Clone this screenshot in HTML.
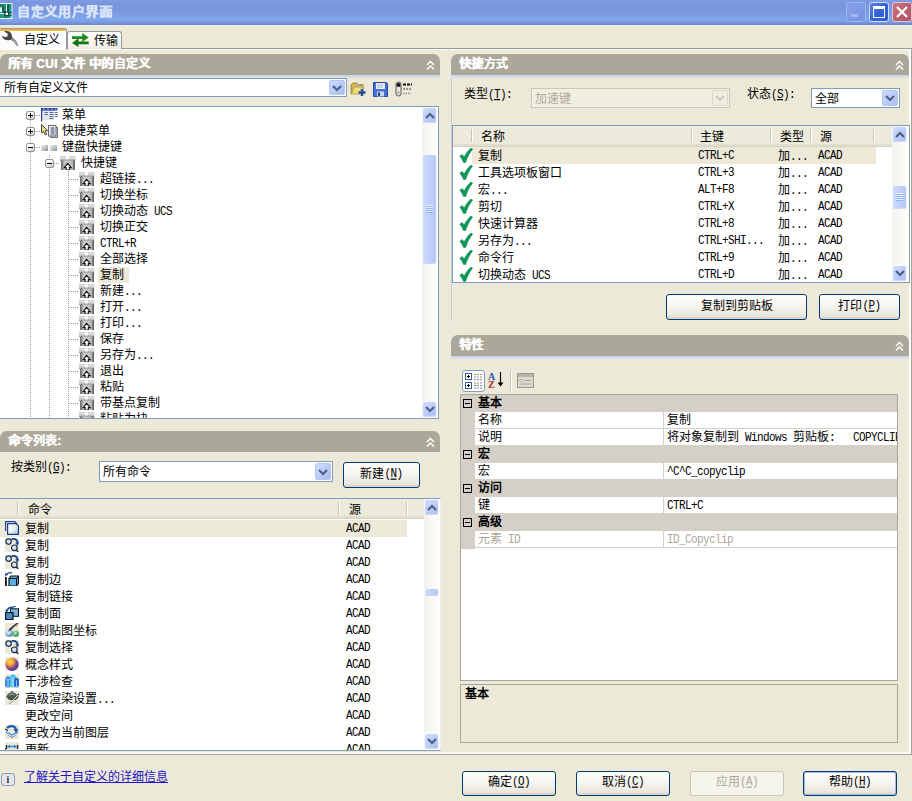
<!DOCTYPE html>
<html lang="zh-CN">
<head>
<meta charset="utf-8">
<title>自定义用户界面</title>
<style>
*{box-sizing:border-box;margin:0;padding:0}
html,body{width:912px;height:801px;overflow:hidden;background:#ece9d8}
body{position:relative;font-family:"Liberation Sans",sans-serif;font-size:12px;color:#000;line-height:16px}
.a{position:absolute}
.l{font-family:"Liberation Mono",monospace;font-size:11px;letter-spacing:-0.6px;display:inline-block;transform:scaleY(1.2);transform-origin:0 78%}
.t{position:absolute;white-space:nowrap;line-height:14px;height:14px}
/* title bar */
#tb{left:0;top:0;width:912px;height:25px;background:linear-gradient(#7f9de4 0px,#7a96df 2px,#7a96df 11px,#7ea7ec 19px,#7c9ce5 22px,#7189c8 24px,#7189c8 25px);border-bottom:1px solid #e9eef9;height:26px}
#tb .tt{left:17px;top:4px;font-size:13px;line-height:16px;color:#dbe5f9;font-weight:bold;letter-spacing:0.7px;text-shadow:.4px 0 #dbe5f9}
.cb{position:absolute;top:2px;width:19px;height:19px;border:1px solid #cfdcf8;border-radius:3px}
/* tabs */
.hdr{position:absolute;height:21px;background:#aca899;color:#fff;font-weight:bold;border-radius:7px 7px 0 0}
.hdr span{position:absolute;left:8px;top:3px;line-height:14px;white-space:nowrap;letter-spacing:.25px;text-shadow:.5px 0 #fff}
.hdr svg{position:absolute;right:5px;top:6px}
.strip{position:absolute;height:3px;background:linear-gradient(#c5d0ee,#dfe3ea)}
.combo{position:absolute;background:#fff;border:1px solid #7f9db9}
.combo .tx{position:absolute;left:3px;top:2px;line-height:14px;white-space:nowrap}
.dd{position:absolute;right:1px;top:1px;bottom:1px;width:16px;border:1px solid #b4c6f3;border-radius:2px;background:linear-gradient(135deg,#cfdcfd,#b6c9f7 60%,#a9bdf3)}
.dd svg{position:absolute;left:2px;top:50%;margin-top:-3px}
.btn{position:absolute;border:1px solid #003c74;border-radius:3px;background:linear-gradient(#ffffff,#f4f3ee 50%,#ebe8dc 85%,#d6d0c5);text-align:center;white-space:nowrap}
.btn span.c{display:inline-block}
.box{position:absolute;background:#fff;border:1px solid #7f9db9;overflow:hidden}
.sb{position:absolute;width:16px;background:linear-gradient(90deg,#f3f1ec,#fefefb)}
.sbb{position:absolute;left:0;width:15px;height:16px;border:1px solid #f6f8fe;border-bottom-color:#cfd9f3;border-radius:3px;background:linear-gradient(135deg,#cfdbfc,#bccdf8 55%,#adc0f3)}
.sbb svg{position:absolute;left:1.500px;top:3.500px}
.thumb{position:absolute;left:0;width:15px;border:1px solid #f6f8fe;border-bottom-color:#cfd9f3;border-radius:3px;background:linear-gradient(90deg,#cddafd,#c1d1fb 50%,#b5c7f6)}
.lh{position:absolute;left:0;top:0;height:20px;background:#ebeadb;border-bottom:1px solid #d6d2c2;box-shadow:inset 0 -2px 0 #e2dece}
.lh i{position:absolute;top:3px;width:1px;height:13px;background:#c7c5b2;border-right:1px solid #fff;width:2px}
.lh span{position:absolute;top:4px;line-height:14px;white-space:nowrap}
.row{position:absolute;left:0;height:17px;white-space:nowrap}
.row>span{position:absolute;top:2px;line-height:14px}
.sel{position:absolute;background:#ece9d8}
</style>
</head>
<body>
<!-- TITLE BAR -->
<div id="tb" class="a">
<svg class="a" style="left:0;top:3px" width="13" height="16" viewBox="0 0 13 16"><defs><linearGradient id="ti" x1="0" y1="0" x2="1" y2="1"><stop offset="0" stop-color="#0d7a64"/><stop offset=".6" stop-color="#1f9c86"/><stop offset="1" stop-color="#4cc8b2"/></linearGradient></defs><rect x="-1" y=".5" width="13" height="15" fill="url(#ti)" stroke="#eaf6f3" stroke-width="1"/><path d="M-1 9c.5-3 1-5 2-5s1.500 2 2 5z" fill="#e8f4f0"/><path d="M3 4v5h2M8 1.500v7.500" stroke="#0a4a3c" stroke-width="1.600" fill="none"/><path d="M6.500 1v8.500" stroke="#f4fbf9" stroke-width="1.100"/><path d="M-1 10.500h5" stroke="#f4fbf9" stroke-width="1.100"/><rect x="5" y="9" width="3.600" height="3.600" fill="#f4fbf9" stroke="#0a4a3c" stroke-width="1.200"/><path d="M9.500 9.500h2M9.500 12.500h2M5.500 13.500v1.500M8 13.500v1.500" stroke="#0a4a3c" stroke-width="1.300"/></svg>
<div class="t tt">自定义用户界面</div>
<div class="cb" style="left:846px;width:20px;height:20px;background:linear-gradient(135deg,#86a1e8,#7893e0);border-color:#9db4f0"><div class="a" style="left:4px;top:11px;width:7px;height:3px;background:#a3b8ee"></div></div>
<div class="cb" style="left:869px;width:20px;height:20px;background:linear-gradient(135deg,#5a82e6,#3463d4 50%,#2d5cd0)"><div class="a" style="left:3px;top:3px;width:12px;height:12px;border:1px solid #fff;border-top-width:3px"></div></div>
<div class="cb" style="left:892px;width:20px;height:20px;background:linear-gradient(135deg,#cc7a88,#bc5e6c 50%,#b55463);border-color:#e6c4d2"><svg class="a" style="left:3px;top:3px" width="12" height="12" viewBox="0 0 12 12"><path d="M1 1l10 10M11 1l-10 10" stroke="#fff" stroke-width="2.3"/></svg></div>
</div>
<!--TABS-->
<div class="a" style="left:0;top:48px;width:912px;height:1px;background:#919b9c"></div>
<div class="a" style="left:0;top:49px;width:912px;height:1px;background:#fbfaf6"></div>
<div class="a" style="left:67px;top:31px;width:55px;height:18px;border:1px solid #919b9c;border-bottom:none;border-radius:3px 3px 0 0;background:linear-gradient(#ffffff,#f7f6f0 60%,#ecebe4)"></div>
<svg class="a" style="left:72px;top:33px" width="17" height="14" viewBox="0 0 17 14"><path d="M0 3.200h10.200v-3.200l6.500 4.600-6.500 4.400v-2.900h-10.200z" fill="#1d8a1d"/><path d="M16.700 8.400h-10.200v-3.100l-6.500 4.700 6.500 4v-2.700h10.200z" fill="#147214"/><path d="M0 3.700h10.500" stroke="#3fae3f" stroke-width=".8"/></svg>
<div class="t" style="left:94px;top:34px">传输</div>
<div class="a" style="left:-1px;top:28px;width:68px;height:22px;border:1px solid #919b9c;border-bottom:none;border-radius:3px 3px 0 0;background:#fcfcfe;overflow:hidden"><div class="a" style="left:-1px;top:-1px;width:70px;height:3px;background:linear-gradient(#e68b2c,#ffc73c)"></div></div>
<svg class="a" style="left:2px;top:30px" width="17" height="16" viewBox="0 0 17 16"><path d="M2 1.500C5 .3 8.700 1.300 9.700 4.500 10.100 6 9.700 7 10.200 7.500 12.700 9 15.200 12 16.200 15.800L14.300 15.500C13 12.500 11 10.600 8.500 9.700 7 10.600 4.500 10.600 2.500 9.600 1 8.600 0 7 .3 5.500L3 7.200 5.600 6.200 5.600 3.600Z" fill="#474747"/><path d="M9.500 8.800C12 10 14 12.300 15.300 15.600" stroke="#bdbdbd" stroke-width="1.100" fill="none"/></svg>
<div class="t" style="left:24px;top:33px">自定义</div>
<!--LEFT-->
<div class="hdr" style="left:0;top:54px;width:440px"><span>所有 CUI 文件 中的自定义</span><svg width="9" height="11" viewBox="0 0 9 11"><path d="M1 5l3.500-3.500 3.500 3.500M1 9.500l3.500-3.500 3.500 3.500" stroke="#fff" stroke-width="1.400" fill="none"/></svg></div>
<div class="strip" style="left:0;top:75px;width:440px"></div>
<div class="combo" style="left:-1px;top:78px;width:348px;height:19px"><div class="tx" style="left:4px">所有自定义文件</div><div class="dd"><svg width="10" height="7" viewBox="0 0 10 7"><path d="M1 1l4 4 4-4" stroke="#4d6185" stroke-width="2.200" fill="none"/></svg></div></div>
<svg class="a" style="left:350px;top:81px" width="17" height="16" viewBox="0 0 17 16"><path d="M1 4l2-2h4l1 1.500h5v9h-12z" fill="#d9b64a" stroke="#8a7a3a" stroke-width=".8"/><path d="M1.500 13l2.500-7h9.500l-2.500 7z" fill="#f4dc7a" stroke="#9a8a44" stroke-width=".7"/><path d="M6 4.500l4 1M6.500 3l3 .8" stroke="#9ab0c8" stroke-width="1"/><path d="M12 8v7M8.500 11.500h7" stroke="#1d4f9a" stroke-width="2.400"/></svg>
<svg class="a" style="left:373px;top:82px" width="15" height="15" viewBox="0 0 15 15"><path d="M.5.5h13l1 1v13h-14z" fill="#4673d3" stroke="#2a4aa0"/><rect x="3" y="1" width="9" height="6" fill="#e8eefc"/><path d="M4 3h6M4 5h6" stroke="#9aaad0" stroke-width=".8"/><rect x="4" y="9.500" width="7" height="5" fill="#c9d3ea"/><rect x="5" y="10.500" width="2" height="3.500" fill="#28408a"/></svg>
<svg class="a" style="left:395px;top:81px" width="18" height="16" viewBox="0 0 18 16"><rect x="1" y="1" width="5" height="14" rx="2.500" fill="#e6e6e6" stroke="#555" stroke-width="1"/><circle cx="3.500" cy="4" r="2" fill="#111"/><circle cx="3.500" cy="11.500" r="1.500" fill="#bbb"/><path d="M8 3.500h9" stroke="#111" stroke-width="2" stroke-dasharray="3 1"/><path d="M8 8h8" stroke="#777" stroke-width="1.500" stroke-dasharray="2 1"/><path d="M8 12.500h8" stroke="#999" stroke-width="1.500" stroke-dasharray="1.500 1"/></svg>
<div class="box" style="left:-1px;top:106px;width:440px;height:313px">
<div class="a" style="left:30px;top:9px;width:1px;height:310px;background-image:linear-gradient(#a0a0a0 50%,transparent 50%);background-size:1px 2px"></div><div class="a" style="left:49px;top:48px;width:1px;height:270px;background-image:linear-gradient(#a0a0a0 50%,transparent 50%);background-size:1px 2px"></div><div class="a" style="left:68px;top:64px;width:1px;height:260px;background-image:linear-gradient(#a0a0a0 50%,transparent 50%);background-size:1px 2px"></div>
<div class="a" style="left:35px;top:8px;width:6px;height:1px;background-image:linear-gradient(90deg,#a0a0a0 50%,transparent 50%);background-size:2px 1px"></div><div class="a" style="left:26px;top:4px;width:9px;height:9px;border:1px solid #8a98a6;border-radius:2px;background:linear-gradient(135deg,#fff 30%,#c8c1b2)"><div class="a" style="left:1px;top:3px;width:5px;height:1px;background:#000"></div><div class="a" style="left:3px;top:1px;width:1px;height:5px;background:#000"></div></div><svg class="a" style="left:41px;top:1px" width="17" height="14" viewBox="0 0 17 14"><rect x="1" y="2" width="12" height="10" fill="#e6e6ee"/><path d="M.6 0v13.500" stroke="#1d3f94" stroke-width="1.200"/><rect x="0" y="0" width="16.500" height="2.600" fill="#1d3f94"/><path d="M2 1.200h2M6 1.200h2M10 1.200h2M14 1.200h1.500" stroke="#e6ecfa" stroke-width=".8"/><path d="M3.500 4.500h3.500M3.500 6.500h3.500M8.500 4.500h4M8.500 6.500h4M8.500 8.500h4M8.500 10.500h4M13.700 4.500h3M13.700 6.500h3M13.700 8.500h3" stroke="#5a6a9a" stroke-width="1.100"/></svg><div class="t" style="left:62px;top:1px">菜单</div>
<div class="a" style="left:35px;top:24px;width:6px;height:1px;background-image:linear-gradient(90deg,#a0a0a0 50%,transparent 50%);background-size:2px 1px"></div><div class="a" style="left:26px;top:20px;width:9px;height:9px;border:1px solid #8a98a6;border-radius:2px;background:linear-gradient(135deg,#fff 30%,#c8c1b2)"><div class="a" style="left:1px;top:3px;width:5px;height:1px;background:#000"></div><div class="a" style="left:3px;top:1px;width:1px;height:5px;background:#000"></div></div><svg class="a" style="left:41px;top:17px" width="17" height="14" viewBox="0 0 17 14"><rect x="9.500" y="3.500" width="7" height="10" fill="#ddd" stroke="#777"/><rect x="7.500" y="1.500" width="7.500" height="10.500" fill="#f4f4f4" stroke="#666"/><path d="M9.500 4h4M9.500 6h4M9.500 8h4M9.500 10h4" stroke="#2a3a7a" stroke-width="1"/><path d="M.6.5v8.500l2-1.600 1.700 3.600 1.500-.7-1.700-3.500h2.600z" fill="#f2ea7c" stroke="#333" stroke-width=".9"/></svg><div class="t" style="left:62px;top:17px">快捷菜单</div>
<div class="a" style="left:35px;top:40px;width:6px;height:1px;background-image:linear-gradient(90deg,#a0a0a0 50%,transparent 50%);background-size:2px 1px"></div><div class="a" style="left:26px;top:36px;width:9px;height:9px;border:1px solid #8a98a6;border-radius:2px;background:linear-gradient(135deg,#fff 30%,#c8c1b2)"><div class="a" style="left:1px;top:3px;width:5px;height:1px;background:#000"></div></div><div class="a" style="left:41px;top:38px;width:7px;height:6px;background:linear-gradient(135deg,#f0f0f0,#c4c4c4 50%,#8c8c8c)"></div><div class="a" style="left:50px;top:38px;width:7px;height:6px;background:linear-gradient(135deg,#f0f0f0,#c4c4c4 50%,#8c8c8c)"></div><div class="t" style="left:62px;top:33px">键盘快捷键</div>
<div class="a" style="left:54px;top:56px;width:6px;height:1px;background-image:linear-gradient(90deg,#a0a0a0 50%,transparent 50%);background-size:2px 1px"></div><div class="a" style="left:45px;top:52px;width:9px;height:9px;border:1px solid #8a98a6;border-radius:2px;background:linear-gradient(135deg,#fff 30%,#c8c1b2)"><div class="a" style="left:1px;top:3px;width:5px;height:1px;background:#000"></div></div><svg class="a" style="left:60px;top:49px" width="16" height="14" viewBox="0 0 16 14"><path d="M0 0h6v3.200h2.800v-3.200h6.700v5h-15.500z" fill="url(#kt)"/><rect x="1" y="4.600" width="14" height="9.400" fill="url(#kg)"/><path d="M7.700 7.400l3.500 4.200h-1.900v2.400h-3.200v-2.400h-1.900z" fill="#fff" stroke="#111" stroke-width="1.100"/></svg><div class="t" style="left:81px;top:49px">快捷键</div>
<div class="a" style="left:69px;top:72px;width:10px;height:1px;background-image:linear-gradient(90deg,#a0a0a0 50%,transparent 50%);background-size:2px 1px"></div><svg class="a" style="left:79px;top:65px" width="16" height="14" viewBox="0 0 16 14"><path d="M0 0h6v3.200h2.800v-3.200h6.700v5h-15.500z" fill="url(#kt)"/><rect x="1" y="4.600" width="14" height="9.400" fill="url(#kg)"/><path d="M7.700 7.400l3.500 4.200h-1.900v2.400h-3.200v-2.400h-1.900z" fill="#fff" stroke="#111" stroke-width="1.100"/></svg><div class="t" style="left:100px;top:65px">超链接<span class="l">...</span></div>
<div class="a" style="left:69px;top:88px;width:10px;height:1px;background-image:linear-gradient(90deg,#a0a0a0 50%,transparent 50%);background-size:2px 1px"></div><svg class="a" style="left:79px;top:81px" width="16" height="14" viewBox="0 0 16 14"><path d="M0 0h6v3.200h2.800v-3.200h6.700v5h-15.500z" fill="url(#kt)"/><rect x="1" y="4.600" width="14" height="9.400" fill="url(#kg)"/><path d="M7.700 7.400l3.500 4.200h-1.900v2.400h-3.200v-2.400h-1.900z" fill="#fff" stroke="#111" stroke-width="1.100"/></svg><div class="t" style="left:100px;top:81px">切换坐标</div>
<div class="a" style="left:69px;top:104px;width:10px;height:1px;background-image:linear-gradient(90deg,#a0a0a0 50%,transparent 50%);background-size:2px 1px"></div><svg class="a" style="left:79px;top:97px" width="16" height="14" viewBox="0 0 16 14"><path d="M0 0h6v3.200h2.800v-3.200h6.700v5h-15.500z" fill="url(#kt)"/><rect x="1" y="4.600" width="14" height="9.400" fill="url(#kg)"/><path d="M7.700 7.400l3.500 4.200h-1.900v2.400h-3.200v-2.400h-1.900z" fill="#fff" stroke="#111" stroke-width="1.100"/></svg><div class="t" style="left:100px;top:97px">切换动态<span class="l">&nbsp;UCS</span></div>
<div class="a" style="left:69px;top:120px;width:10px;height:1px;background-image:linear-gradient(90deg,#a0a0a0 50%,transparent 50%);background-size:2px 1px"></div><svg class="a" style="left:79px;top:113px" width="16" height="14" viewBox="0 0 16 14"><path d="M0 0h6v3.200h2.800v-3.200h6.700v5h-15.500z" fill="url(#kt)"/><rect x="1" y="4.600" width="14" height="9.400" fill="url(#kg)"/><path d="M7.700 7.400l3.500 4.200h-1.900v2.400h-3.200v-2.400h-1.900z" fill="#fff" stroke="#111" stroke-width="1.100"/></svg><div class="t" style="left:100px;top:113px">切换正交</div>
<div class="a" style="left:69px;top:136px;width:10px;height:1px;background-image:linear-gradient(90deg,#a0a0a0 50%,transparent 50%);background-size:2px 1px"></div><svg class="a" style="left:79px;top:129px" width="16" height="14" viewBox="0 0 16 14"><path d="M0 0h6v3.200h2.800v-3.200h6.700v5h-15.500z" fill="url(#kt)"/><rect x="1" y="4.600" width="14" height="9.400" fill="url(#kg)"/><path d="M7.700 7.400l3.500 4.200h-1.900v2.400h-3.200v-2.400h-1.900z" fill="#fff" stroke="#111" stroke-width="1.100"/></svg><div class="t" style="left:100px;top:129px"><span class="l">CTRL+R</span></div>
<div class="a" style="left:69px;top:152px;width:10px;height:1px;background-image:linear-gradient(90deg,#a0a0a0 50%,transparent 50%);background-size:2px 1px"></div><svg class="a" style="left:79px;top:145px" width="16" height="14" viewBox="0 0 16 14"><path d="M0 0h6v3.200h2.800v-3.200h6.700v5h-15.500z" fill="url(#kt)"/><rect x="1" y="4.600" width="14" height="9.400" fill="url(#kg)"/><path d="M7.700 7.400l3.500 4.200h-1.900v2.400h-3.200v-2.400h-1.900z" fill="#fff" stroke="#111" stroke-width="1.100"/></svg><div class="t" style="left:100px;top:145px">全部选择</div>
<div class="a" style="left:69px;top:168px;width:10px;height:1px;background-image:linear-gradient(90deg,#a0a0a0 50%,transparent 50%);background-size:2px 1px"></div><div class="sel" style="left:98px;top:160px;width:31px;height:16px"></div><svg class="a" style="left:79px;top:161px" width="16" height="14" viewBox="0 0 16 14"><path d="M0 0h6v3.200h2.800v-3.200h6.700v5h-15.500z" fill="url(#kt)"/><rect x="1" y="4.600" width="14" height="9.400" fill="url(#kg)"/><path d="M7.700 7.400l3.500 4.200h-1.900v2.400h-3.200v-2.400h-1.900z" fill="#fff" stroke="#111" stroke-width="1.100"/></svg><div class="t" style="left:100px;top:161px">复制</div>
<div class="a" style="left:69px;top:184px;width:10px;height:1px;background-image:linear-gradient(90deg,#a0a0a0 50%,transparent 50%);background-size:2px 1px"></div><svg class="a" style="left:79px;top:177px" width="16" height="14" viewBox="0 0 16 14"><path d="M0 0h6v3.200h2.800v-3.200h6.700v5h-15.500z" fill="url(#kt)"/><rect x="1" y="4.600" width="14" height="9.400" fill="url(#kg)"/><path d="M7.700 7.400l3.500 4.200h-1.900v2.400h-3.200v-2.400h-1.900z" fill="#fff" stroke="#111" stroke-width="1.100"/></svg><div class="t" style="left:100px;top:177px">新建<span class="l">...</span></div>
<div class="a" style="left:69px;top:200px;width:10px;height:1px;background-image:linear-gradient(90deg,#a0a0a0 50%,transparent 50%);background-size:2px 1px"></div><svg class="a" style="left:79px;top:193px" width="16" height="14" viewBox="0 0 16 14"><path d="M0 0h6v3.200h2.800v-3.200h6.700v5h-15.500z" fill="url(#kt)"/><rect x="1" y="4.600" width="14" height="9.400" fill="url(#kg)"/><path d="M7.700 7.400l3.500 4.200h-1.900v2.400h-3.200v-2.400h-1.900z" fill="#fff" stroke="#111" stroke-width="1.100"/></svg><div class="t" style="left:100px;top:193px">打开<span class="l">...</span></div>
<div class="a" style="left:69px;top:216px;width:10px;height:1px;background-image:linear-gradient(90deg,#a0a0a0 50%,transparent 50%);background-size:2px 1px"></div><svg class="a" style="left:79px;top:209px" width="16" height="14" viewBox="0 0 16 14"><path d="M0 0h6v3.200h2.800v-3.200h6.700v5h-15.500z" fill="url(#kt)"/><rect x="1" y="4.600" width="14" height="9.400" fill="url(#kg)"/><path d="M7.700 7.400l3.500 4.200h-1.900v2.400h-3.200v-2.400h-1.900z" fill="#fff" stroke="#111" stroke-width="1.100"/></svg><div class="t" style="left:100px;top:209px">打印<span class="l">...</span></div>
<div class="a" style="left:69px;top:232px;width:10px;height:1px;background-image:linear-gradient(90deg,#a0a0a0 50%,transparent 50%);background-size:2px 1px"></div><svg class="a" style="left:79px;top:225px" width="16" height="14" viewBox="0 0 16 14"><path d="M0 0h6v3.200h2.800v-3.200h6.700v5h-15.500z" fill="url(#kt)"/><rect x="1" y="4.600" width="14" height="9.400" fill="url(#kg)"/><path d="M7.700 7.400l3.500 4.200h-1.900v2.400h-3.200v-2.400h-1.900z" fill="#fff" stroke="#111" stroke-width="1.100"/></svg><div class="t" style="left:100px;top:225px">保存</div>
<div class="a" style="left:69px;top:248px;width:10px;height:1px;background-image:linear-gradient(90deg,#a0a0a0 50%,transparent 50%);background-size:2px 1px"></div><svg class="a" style="left:79px;top:241px" width="16" height="14" viewBox="0 0 16 14"><path d="M0 0h6v3.200h2.800v-3.200h6.700v5h-15.500z" fill="url(#kt)"/><rect x="1" y="4.600" width="14" height="9.400" fill="url(#kg)"/><path d="M7.700 7.400l3.500 4.200h-1.900v2.400h-3.200v-2.400h-1.900z" fill="#fff" stroke="#111" stroke-width="1.100"/></svg><div class="t" style="left:100px;top:241px">另存为<span class="l">...</span></div>
<div class="a" style="left:69px;top:264px;width:10px;height:1px;background-image:linear-gradient(90deg,#a0a0a0 50%,transparent 50%);background-size:2px 1px"></div><svg class="a" style="left:79px;top:257px" width="16" height="14" viewBox="0 0 16 14"><path d="M0 0h6v3.200h2.800v-3.200h6.700v5h-15.500z" fill="url(#kt)"/><rect x="1" y="4.600" width="14" height="9.400" fill="url(#kg)"/><path d="M7.700 7.400l3.500 4.200h-1.900v2.400h-3.200v-2.400h-1.900z" fill="#fff" stroke="#111" stroke-width="1.100"/></svg><div class="t" style="left:100px;top:257px">退出</div>
<div class="a" style="left:69px;top:280px;width:10px;height:1px;background-image:linear-gradient(90deg,#a0a0a0 50%,transparent 50%);background-size:2px 1px"></div><svg class="a" style="left:79px;top:273px" width="16" height="14" viewBox="0 0 16 14"><path d="M0 0h6v3.200h2.800v-3.200h6.700v5h-15.500z" fill="url(#kt)"/><rect x="1" y="4.600" width="14" height="9.400" fill="url(#kg)"/><path d="M7.700 7.400l3.500 4.200h-1.900v2.400h-3.200v-2.400h-1.900z" fill="#fff" stroke="#111" stroke-width="1.100"/></svg><div class="t" style="left:100px;top:273px">粘贴</div>
<div class="a" style="left:69px;top:296px;width:10px;height:1px;background-image:linear-gradient(90deg,#a0a0a0 50%,transparent 50%);background-size:2px 1px"></div><svg class="a" style="left:79px;top:289px" width="16" height="14" viewBox="0 0 16 14"><path d="M0 0h6v3.200h2.800v-3.200h6.700v5h-15.500z" fill="url(#kt)"/><rect x="1" y="4.600" width="14" height="9.400" fill="url(#kg)"/><path d="M7.700 7.400l3.500 4.200h-1.900v2.400h-3.200v-2.400h-1.900z" fill="#fff" stroke="#111" stroke-width="1.100"/></svg><div class="t" style="left:100px;top:289px">带基点复制</div>
<div class="a" style="left:69px;top:312px;width:10px;height:1px;background-image:linear-gradient(90deg,#a0a0a0 50%,transparent 50%);background-size:2px 1px"></div><svg class="a" style="left:79px;top:305px" width="16" height="14" viewBox="0 0 16 14"><path d="M0 0h6v3.200h2.800v-3.200h6.700v5h-15.500z" fill="url(#kt)"/><rect x="1" y="4.600" width="14" height="9.400" fill="url(#kg)"/><path d="M7.700 7.400l3.500 4.200h-1.900v2.400h-3.200v-2.400h-1.900z" fill="#fff" stroke="#111" stroke-width="1.100"/></svg><div class="t" style="left:100px;top:305px">粘贴为块</div>
<div class="sb" style="left:422px;top:0px;height:310px"><div class="sbb" style="top:0"><svg width="10" height="7" viewBox="0 0 10 7"><path d="M1 6l4-4 4 4" stroke="#4d6185" stroke-width="2.200" fill="none"/></svg></div><div class="thumb" style="top:47px;height:110px"><div class="a" style="left:3px;top:50%;margin-top:-4px;width:7px;height:8px;background:repeating-linear-gradient(#eef4fe 0,#eef4fe 1px,#8cb0f8 1px,#8cb0f8 2px)"></div></div><div class="sbb" style="top:294px"><svg width="10" height="7" viewBox="0 0 10 7"><path d="M1 1l4 4 4-4" stroke="#4d6185" stroke-width="2.200" fill="none"/></svg></div></div></div>
<div class="hdr" style="left:0;top:431px;width:440px"><span>命令列表:</span><svg width="9" height="11" viewBox="0 0 9 11"><path d="M1 5l3.500-3.500 3.500 3.500M1 9.500l3.500-3.500 3.500 3.500" stroke="#fff" stroke-width="1.400" fill="none"/></svg></div>
<div class="t" style="left:11px;top:460px">按类别<span class="l">(<u>G</u>):</span></div>
<div class="combo" style="left:99px;top:461px;width:234px;height:21px"><div class="tx" style="top:3px">所有命令</div><div class="dd"><svg width="10" height="7" viewBox="0 0 10 7"><path d="M1 1l4 4 4-4" stroke="#4d6185" stroke-width="2.200" fill="none"/></svg></div></div>
<div class="btn" style="left:343px;top:462px;width:77px;height:26px;line-height:22px">新建<span class="l">(<u>N</u>)</span></div>
<div class="box" style="left:-1px;top:498px;width:442px;height:253px;border-right-color:#e8edf6">
<div class="lh" style="width:424px"><i style="left:17px"></i><span style="left:28px">命令</span><i style="left:338px"></i><span style="left:349px">源</span><i style="left:406px"></i></div>
<div class="sel" style="left:0;top:21px;width:407px;height:17px"></div>
<div class="row" style="top:21px"><span style="left:25px">复制</span><span class="l" style="left:346px">ACAD</span></div>
<div class="row" style="top:38px"><span style="left:25px">复制</span><span class="l" style="left:346px">ACAD</span></div>
<div class="row" style="top:55px"><span style="left:25px">复制</span><span class="l" style="left:346px">ACAD</span></div>
<div class="row" style="top:72px"><span style="left:25px">复制边</span><span class="l" style="left:346px">ACAD</span></div>
<div class="row" style="top:89px"><span style="left:25px">复制链接</span><span class="l" style="left:346px">ACAD</span></div>
<div class="row" style="top:106px"><span style="left:25px">复制面</span><span class="l" style="left:346px">ACAD</span></div>
<div class="row" style="top:123px"><span style="left:25px">复制贴图坐标</span><span class="l" style="left:346px">ACAD</span></div>
<div class="row" style="top:140px"><span style="left:25px">复制选择</span><span class="l" style="left:346px">ACAD</span></div>
<div class="row" style="top:157px"><span style="left:25px">概念样式</span><span class="l" style="left:346px">ACAD</span></div>
<div class="row" style="top:174px"><span style="left:25px">干涉检查</span><span class="l" style="left:346px">ACAD</span></div>
<div class="row" style="top:191px"><span style="left:25px">高级渲染设置<span class="l">...</span></span><span class="l" style="left:346px">ACAD</span></div>
<div class="row" style="top:208px"><span style="left:25px">更改空间</span><span class="l" style="left:346px">ACAD</span></div>
<div class="row" style="top:225px"><span style="left:25px">更改为当前图层</span><span class="l" style="left:346px">ACAD</span></div>
<div class="row" style="top:242px"><span style="left:25px">更新</span><span class="l" style="left:346px">ACAD</span></div>
<svg width="0" height="0" style="position:absolute"><defs><linearGradient id="gcp" x1="0" y1="0" x2="1" y2="1"><stop offset="0" stop-color="#fff"/><stop offset=".5" stop-color="#eef4f8"/><stop offset="1" stop-color="#9cc4dc"/></linearGradient><radialGradient id="gsp" cx=".35" cy=".3" r=".8"><stop offset="0" stop-color="#ffe060"/><stop offset=".35" stop-color="#f4a028"/><stop offset=".6" stop-color="#8a4a90"/><stop offset="1" stop-color="#3a30a0"/></radialGradient><radialGradient id="gbl" cx=".4" cy=".35" r=".7"><stop offset="0" stop-color="#fff"/><stop offset=".5" stop-color="#9cc8ec"/><stop offset="1" stop-color="#2a6ab0"/></radialGradient><radialGradient id="ggr" cx=".4" cy=".35" r=".7"><stop offset="0" stop-color="#d8f4d8"/><stop offset=".5" stop-color="#5ab868"/><stop offset="1" stop-color="#1a7a30"/></radialGradient><linearGradient id="kg" x1="0" y1="0" x2="1" y2="0"><stop offset="0" stop-color="#6c6c6c"/><stop offset=".14" stop-color="#8a8a8a"/><stop offset=".2" stop-color="#c2c2c2"/><stop offset=".55" stop-color="#cdcdcd"/><stop offset=".82" stop-color="#b4b4b4"/><stop offset=".88" stop-color="#7a7a7a"/><stop offset="1" stop-color="#666"/></linearGradient><linearGradient id="kt" x1="0" y1="0" x2="0" y2="1"><stop offset="0" stop-color="#c8c8c8"/><stop offset=".3" stop-color="#e2e2e2"/><stop offset=".7" stop-color="#bcbcbc"/><stop offset="1" stop-color="#888"/></linearGradient></defs></svg>
<svg class="a" style="left:5px;top:22px" width="14" height="14" viewBox="0 0 14 14"><rect width="14" height="14" fill="#ece9d8"/><path d="M.6 10v-9.400h9l2 2v1" stroke="#1a3c8c" stroke-width="1.200" fill="#f4f8fc"/><path d="M2.600 2.600h8.400l2.400 2.400v8.400h-10.800z" fill="url(#gcp)" stroke="#1a3c8c" stroke-width="1.200"/></svg>
<svg class="a" style="left:5px;top:39px" width="14" height="14" viewBox="0 0 14 14"><rect width="14" height="14" fill="#ece9d8"/><circle cx="3.600" cy="3.600" r="2.700" fill="#d4e6f6" stroke="#1e2c48" stroke-width="1.200"/><circle cx="9.300" cy="9.800" r="2.800" fill="#d4e6f6" stroke="#1e2c48" stroke-width="1.200"/><path d="M6.500 1.300c3-1.300 6 .2 6.200 3.700" stroke="#1d4e8c" stroke-width="1.800" fill="none"/><path d="M10.200 4.300h4l-1.800 3.400z" fill="#1d4e8c"/><path d="M11.300 12l2 1.800" stroke="#1e2c48" stroke-width="1.500"/></svg>
<svg class="a" style="left:5px;top:56px" width="14" height="14" viewBox="0 0 14 14"><rect width="14" height="14" fill="#ece9d8"/><circle cx="3.600" cy="3.600" r="2.700" fill="#d4e6f6" stroke="#1e2c48" stroke-width="1.200"/><circle cx="9.300" cy="9.800" r="2.800" fill="#d4e6f6" stroke="#1e2c48" stroke-width="1.200"/><path d="M6.500 1.300c3-1.300 6 .2 6.200 3.700" stroke="#1d4e8c" stroke-width="1.800" fill="none"/><path d="M10.200 4.300h4l-1.800 3.400z" fill="#1d4e8c"/><path d="M11.300 12l2 1.800" stroke="#1e2c48" stroke-width="1.500"/></svg>
<svg class="a" style="left:5px;top:141px" width="14" height="14" viewBox="0 0 14 14"><rect width="14" height="14" fill="#ece9d8"/><circle cx="3.600" cy="3.600" r="2.700" fill="#d4e6f6" stroke="#1e2c48" stroke-width="1.200"/><circle cx="9.300" cy="9.800" r="2.800" fill="#d4e6f6" stroke="#1e2c48" stroke-width="1.200"/><path d="M6.500 1.300c3-1.300 6 .2 6.200 3.700" stroke="#1d4e8c" stroke-width="1.800" fill="none"/><path d="M10.200 4.300h4l-1.800 3.400z" fill="#1d4e8c"/><path d="M11.300 12l2 1.800" stroke="#1e2c48" stroke-width="1.500"/></svg>
<svg class="a" style="left:5px;top:73px" width="14" height="14" viewBox="0 0 14 14"><rect x="0" y="5" width="1.800" height="9" fill="#111"/><path d="M4 6.500l2-2.500h7.500v7.500l-2 2.500h-7.500z" fill="#58b2e0" stroke="#111" stroke-width="1.200"/><path d="M4 6.500h7.500v7.500M11.500 6.500l2-2.500" stroke="#111" stroke-width="1" fill="none"/><path d="M1.200 3.200c1-2.400 4-3 6-2" stroke="#1d4e8c" stroke-width="1.300" fill="none"/><path d="M0 .8l.4 3.400 2.800-1.600z" fill="#1d4e8c"/></svg>
<svg class="a" style="left:5px;top:107px" width="14" height="14" viewBox="0 0 14 14"><rect x="5.500" y="2.800" width="8" height="7.500" fill="#7ab4e4" stroke="#111"/><rect x=".6" y="6.600" width="7.400" height="6.900" fill="#4a8cd0" stroke="#111" stroke-width="1.200"/><path d="M2 5.200c.2-3 3.400-4.600 6.400-3.400" stroke="#1d4e8c" stroke-width="1.600" fill="none"/><path d="M0 3.600l3.600.4-2 2.800z" fill="#1d4e8c"/><path d="M8 1l3-1" stroke="#1d4e8c" stroke-width="1.200"/></svg>
<svg class="a" style="left:5px;top:124px" width="14" height="14" viewBox="0 0 14 14"><rect width="14" height="14" fill="#ece9d8"/><circle cx="10.800" cy="10.800" r="3" fill="url(#ggr)"/><circle cx="4.200" cy="10" r="3.800" fill="url(#gbl)"/><path d="M13.500 0l-7.500 7-3 2 1.500-3.500 7.500-6z" fill="#3a3a3a"/><path d="M13.500 0l-3 2.500 1 1z" fill="#c87a3a"/></svg>
<svg class="a" style="left:5px;top:158px" width="14" height="14" viewBox="0 0 14 14"><rect width="14" height="14" fill="#ece9d8"/><circle cx="7" cy="7.300" r="6.600" fill="url(#gsp)"/></svg>
<svg class="a" style="left:5px;top:175px" width="14" height="14" viewBox="0 0 14 14"><rect width="14" height="14" fill="#ece9d8"/><path d="M0 4l3-2 3 2v8l-3 2-3-2z" fill="#3a8ad8"/><path d="M3 6v8M0 4l3 2 3-2" stroke="#9ad4f8" stroke-width="1" fill="none"/><path d="M5 2l3-2 3 2v10l-3 2-3-2z" fill="#58c0f0"/><path d="M8 4v10" stroke="#d0f0ff" stroke-width="1"/><path d="M9 5l2.500-1.500 2.500 1.500v7l-2.500 1.500-2.500-1.500z" fill="#2a6ac8"/><path d="M11.500 6.500v7" stroke="#8ac8f4" stroke-width="1"/></svg>
<svg class="a" style="left:5px;top:192px" width="14" height="14" viewBox="0 0 14 14"><rect width="14" height="14" fill="#ece9d8"/><path d="M2 5c0-2 2-3.500 5-3.500s5 1.500 5 3.500l1.500-1v2l-2.500 3h-7l-3-3.500 1-.5z" fill="#4a5a4e"/><path d="M5.500 1.500h3l-.5-1.500h-2z" fill="#5a6a5e"/><path d="M4 4.500c1-1.500 4-1.500 5.500-.5" stroke="#a8b8aa" stroke-width="1" fill="none"/><path d="M13.500 2.500l-8 8.500-1.500 2 2.200-1.200 8-8.500z" fill="#222"/><path d="M13 4l-7.500 7.800" stroke="#fff" stroke-width="1"/></svg>
<svg class="a" style="left:5px;top:226px" width="14" height="14" viewBox="0 0 14 14"><rect width="14" height="14" fill="#ece9d8"/><path d="M1 9l6 3 6-3-6 4z" fill="#2a6ab8"/><path d="M1 7l6 3 6-3" stroke="#5a9ad8" stroke-width="1.400" fill="none"/><path d="M2 3c3-3 8-2.500 9 1.500" stroke="#1d5ab0" stroke-width="2.200" fill="none"/><path d="M8.500 4h5l-2.500 4.500z" fill="#1d5ab0"/><path d="M0 4l3 1.500" stroke="#222" stroke-width="1.200"/></svg>
<svg class="a" style="left:5px;top:243px" width="14" height="14" viewBox="0 0 14 14"><rect width="14" height="14" fill="#ece9d8"/><path d="M1.500 3v4M12.500 3v4" stroke="#222" stroke-width="1.400"/><path d="M3 4.500h8" stroke="#3a8ad0" stroke-width="1.600"/><path d="M2 4.500l3-2v4zM12 4.500l-3-2v4z" fill="#3a8ad0"/><path d="M0 7h1" stroke="#222" stroke-width="1.500"/></svg>
<div class="sb" style="left:424px;top:0px;height:250px"><div class="sbb" style="top:0"><svg width="10" height="7" viewBox="0 0 10 7"><path d="M1 6l4-4 4 4" stroke="#4d6185" stroke-width="2.200" fill="none"/></svg></div><div class="thumb" style="top:89px;height:8px"></div><div class="sbb" style="top:234px"><svg width="10" height="7" viewBox="0 0 10 7"><path d="M1 1l4 4 4-4" stroke="#4d6185" stroke-width="2.200" fill="none"/></svg></div></div></div>
<!--RIGHT-->
<div class="a" style="left:451px;top:75px;width:1px;height:246px;background:#c6cde0"></div>
<div class="a" style="left:0;top:752px;width:911px;height:1px;background:#f6f5ee"></div><div class="a" style="left:0;top:753px;width:911px;height:1px;background:#fff"></div><div class="a" style="left:0;top:754px;width:912px;height:1px;background:#a3a39a"></div>
<div class="a" style="left:909px;top:49px;width:2px;height:705px;background:#fff"></div><div class="a" style="left:911px;top:48px;width:1px;height:707px;background:#a3a39a"></div>
<div class="hdr" style="left:451px;top:54px;width:458px"><span>快捷方式</span><svg width="9" height="11" viewBox="0 0 9 11"><path d="M1 5l3.500-3.500 3.500 3.500M1 9.500l3.500-3.500 3.500 3.500" stroke="#fff" stroke-width="1.400" fill="none"/></svg></div>
<div class="strip" style="left:451px;top:75px;width:458px"></div>
<div class="t" style="left:464px;top:87px">类型<span class="l">(<u>T</u>):</span></div>
<div class="combo" style="left:531px;top:88px;width:199px;height:20px;background:#f1efe2;border-color:#c9c7ba"><div class="tx" style="top:3px;color:#aca899">加速键</div><div class="dd" style="background:#f1efe2;border-color:#d8d6c8"><svg width="10" height="7" viewBox="0 0 10 7"><path d="M1 1l4 4 4-4" stroke="#c9c7ba" stroke-width="2.200" fill="none"/></svg></div></div>
<div class="t" style="left:747px;top:87px">状态<span class="l">(<u>S</u>):</span></div>
<div class="combo" style="left:811px;top:88px;width:89px;height:20px"><div class="tx" style="top:3px;left:3px">全部</div><div class="dd"><svg width="10" height="7" viewBox="0 0 10 7"><path d="M1 1l4 4 4-4" stroke="#4d6185" stroke-width="2.200" fill="none"/></svg></div></div>
<div class="box" style="left:452px;top:125px;width:458px;height:158px">
<div class="lh" style="width:439px;height:21px"><i style="left:18px"></i><span style="left:28px">名称</span><i style="left:238px"></i><span style="left:247px">主键</span><i style="left:317px"></i><span style="left:327px">类型</span><i style="left:357px"></i><span style="left:367px">源</span><i style="left:420px"></i></div>
<div class="sel" style="left:19px;top:21px;width:404px;height:17px"></div>
<div class="row" style="top:21px"><svg class="a" style="left:6px;top:1px" width="14" height="15" viewBox="0 0 14 15"><path d="M.8 8.300l2.400-1.800 1.900 2.600c1.800-3.600 3.900-6.600 6.900-9.100l1.600 1c-2.800 3.600-5.300 8.200-7 13.600h-2c-1-2.500-2.200-4.600-3.800-6.300z" fill="#0a9a58" stroke="#067a44" stroke-width=".5"/></svg><span style="left:25px">复制</span><span class="l" style="left:245px">CTRL+C</span><span style="left:325px">加<span class="l">...</span></span><span class="l" style="left:365px">ACAD</span></div>
<div class="row" style="top:38px"><svg class="a" style="left:6px;top:1px" width="14" height="15" viewBox="0 0 14 15"><path d="M.8 8.300l2.400-1.800 1.900 2.600c1.800-3.600 3.900-6.600 6.900-9.100l1.600 1c-2.800 3.600-5.300 8.200-7 13.600h-2c-1-2.500-2.200-4.600-3.800-6.300z" fill="#0a9a58" stroke="#067a44" stroke-width=".5"/></svg><span style="left:25px">工具选项板窗口</span><span class="l" style="left:245px">CTRL+3</span><span style="left:325px">加<span class="l">...</span></span><span class="l" style="left:365px">ACAD</span></div>
<div class="row" style="top:55px"><svg class="a" style="left:6px;top:1px" width="14" height="15" viewBox="0 0 14 15"><path d="M.8 8.300l2.400-1.800 1.900 2.600c1.800-3.600 3.900-6.600 6.900-9.100l1.600 1c-2.800 3.600-5.300 8.200-7 13.600h-2c-1-2.500-2.200-4.600-3.800-6.300z" fill="#0a9a58" stroke="#067a44" stroke-width=".5"/></svg><span style="left:25px">宏<span class="l">...</span></span><span class="l" style="left:245px">ALT+F8</span><span style="left:325px">加<span class="l">...</span></span><span class="l" style="left:365px">ACAD</span></div>
<div class="row" style="top:72px"><svg class="a" style="left:6px;top:1px" width="14" height="15" viewBox="0 0 14 15"><path d="M.8 8.300l2.400-1.800 1.900 2.600c1.800-3.600 3.900-6.600 6.900-9.100l1.600 1c-2.800 3.600-5.300 8.200-7 13.600h-2c-1-2.500-2.200-4.600-3.800-6.300z" fill="#0a9a58" stroke="#067a44" stroke-width=".5"/></svg><span style="left:25px">剪切</span><span class="l" style="left:245px">CTRL+X</span><span style="left:325px">加<span class="l">...</span></span><span class="l" style="left:365px">ACAD</span></div>
<div class="row" style="top:89px"><svg class="a" style="left:6px;top:1px" width="14" height="15" viewBox="0 0 14 15"><path d="M.8 8.300l2.400-1.800 1.900 2.600c1.800-3.600 3.900-6.600 6.900-9.100l1.600 1c-2.800 3.600-5.300 8.200-7 13.600h-2c-1-2.500-2.200-4.600-3.800-6.300z" fill="#0a9a58" stroke="#067a44" stroke-width=".5"/></svg><span style="left:25px">快速计算器</span><span class="l" style="left:245px">CTRL+8</span><span style="left:325px">加<span class="l">...</span></span><span class="l" style="left:365px">ACAD</span></div>
<div class="row" style="top:106px"><svg class="a" style="left:6px;top:1px" width="14" height="15" viewBox="0 0 14 15"><path d="M.8 8.300l2.400-1.800 1.900 2.600c1.800-3.600 3.900-6.600 6.900-9.100l1.600 1c-2.800 3.600-5.300 8.200-7 13.600h-2c-1-2.500-2.200-4.600-3.800-6.300z" fill="#0a9a58" stroke="#067a44" stroke-width=".5"/></svg><span style="left:25px">另存为<span class="l">...</span></span><span class="l" style="left:245px">CTRL+SHI...</span><span style="left:325px">加<span class="l">...</span></span><span class="l" style="left:365px">ACAD</span></div>
<div class="row" style="top:123px"><svg class="a" style="left:6px;top:1px" width="14" height="15" viewBox="0 0 14 15"><path d="M.8 8.300l2.400-1.800 1.900 2.600c1.800-3.600 3.900-6.600 6.900-9.100l1.600 1c-2.800 3.600-5.300 8.200-7 13.600h-2c-1-2.500-2.200-4.600-3.800-6.300z" fill="#0a9a58" stroke="#067a44" stroke-width=".5"/></svg><span style="left:25px">命令行</span><span class="l" style="left:245px">CTRL+9</span><span style="left:325px">加<span class="l">...</span></span><span class="l" style="left:365px">ACAD</span></div>
<div class="row" style="top:140px"><svg class="a" style="left:6px;top:1px" width="14" height="15" viewBox="0 0 14 15"><path d="M.8 8.300l2.400-1.800 1.900 2.600c1.800-3.600 3.900-6.600 6.900-9.100l1.600 1c-2.800 3.600-5.300 8.200-7 13.600h-2c-1-2.500-2.200-4.600-3.800-6.300z" fill="#0a9a58" stroke="#067a44" stroke-width=".5"/></svg><span style="left:25px">切换动态<span class="l">&nbsp;UCS</span></span><span class="l" style="left:245px">CTRL+D</span><span style="left:325px">加<span class="l">...</span></span><span class="l" style="left:365px">ACAD</span></div>
<div class="sb" style="left:439px;top:0px;height:155px"><div class="sbb" style="top:0"><svg width="10" height="7" viewBox="0 0 10 7"><path d="M1 6l4-4 4 4" stroke="#4d6185" stroke-width="2.200" fill="none"/></svg></div><div class="thumb" style="top:59px;height:24px"><div class="a" style="left:3px;top:50%;margin-top:-4px;width:7px;height:8px;background:repeating-linear-gradient(#eef4fe 0,#eef4fe 1px,#8cb0f8 1px,#8cb0f8 2px)"></div></div><div class="sbb" style="top:139px"><svg width="10" height="7" viewBox="0 0 10 7"><path d="M1 1l4 4 4-4" stroke="#4d6185" stroke-width="2.200" fill="none"/></svg></div></div></div>
<div class="btn" style="left:666px;top:294px;width:141px;height:26px;line-height:22px">复制到剪贴板</div>
<div class="btn" style="left:819px;top:294px;width:81px;height:26px;line-height:22px">打印<span class="l">(<u>P</u>)</span></div>
<div class="hdr" style="left:451px;top:335px;width:458px"><span>特性</span><svg width="9" height="11" viewBox="0 0 9 11"><path d="M1 5l3.500-3.500 3.500 3.500M1 9.500l3.500-3.500 3.500 3.500" stroke="#fff" stroke-width="1.400" fill="none"/></svg></div>
<div class="strip" style="left:451px;top:356px;width:458px"></div>
<div class="a" style="left:462px;top:370px;width:23px;height:22px;border:1px solid #7f9db9;border-radius:3px;background:#fff"></div>
<svg class="a" style="left:465px;top:373px" width="18" height="16" viewBox="0 0 18 16"><rect x=".5" y=".5" width="6" height="6" fill="#fff" stroke="#3a5a9a"/><rect x=".5" y="9.500" width="6" height="6" fill="#fff" stroke="#3a5a9a"/><path d="M2 3.500h3M3.500 2v3M2 12.500h3M3.500 11v3" stroke="#000" stroke-width="1"/><path d="M9 1.500h8M9 4h8M9 6.500h8M9 10h8M9 12.500h8M9 15h8" stroke="#8a8a8a" stroke-width="1" stroke-dasharray="2 1"/></svg>
<div class="a" style="left:488px;top:372px;font:bold 10px/10px 'Liberation Serif',serif;color:#2a4cb0">A</div><div class="a" style="left:488px;top:380px;font:bold 10px/10px 'Liberation Serif',serif;color:#a02828">Z</div>
<svg class="a" style="left:497px;top:372px" width="7" height="16" viewBox="0 0 7 16"><path d="M3.500 0v13" stroke="#000" stroke-width="1.200"/><path d="M.5 10.500l3 4 3-4z" fill="#000"/></svg>
<div class="a" style="left:510px;top:371px;width:1px;height:20px;background:#c5c2b2;border-right:1px solid #fff;width:2px"></div>
<svg class="a" style="left:517px;top:373px" width="17" height="15" viewBox="0 0 17 15"><rect x=".5" y=".5" width="16" height="14" fill="#dcdad0" stroke="#9a978a"/><rect x="1" y="1" width="15" height="3" fill="#b8b5a8"/><rect x="3" y="6.500" width="2" height="2" fill="#fff" stroke="#9a978a" stroke-width=".6"/><path d="M7 7.500h7M3 11h11" stroke="#a8a598" stroke-width="1.200"/></svg>
<div class="a" style="left:460px;top:394px;width:438px;height:287px;background:#fff;border:1px solid #aca899;overflow:hidden">
<div class="a" style="left:0;top:0;width:14px;height:154px;background:#d4d0c8"></div>
<div class="a" style="left:0;top:0px;width:436px;height:17px;background:#d4d0c8"><div class="a" style="left:2px;top:4px;width:9px;height:9px;border:1px solid #000;background:#d4d0c8"><div class="a" style="left:1px;top:3px;width:5px;height:1px;background:#000"></div></div><div class="t" style="left:17px;top:1px;font-weight:bold">基本</div></div>
<div class="a" style="left:14px;top:17px;width:422px;height:17px;border-bottom:1px solid #d4d0c8;color:#000"><div class="t" style="left:3px;top:1px">名称</div><div class="a" style="left:188px;top:0;width:1px;height:17px;background:#d4d0c8"></div><div class="t" style="left:192px;top:1px">复制</div></div>
<div class="a" style="left:14px;top:34px;width:422px;height:17px;border-bottom:1px solid #d4d0c8;color:#000"><div class="t" style="left:3px;top:1px">说明</div><div class="a" style="left:188px;top:0;width:1px;height:17px;background:#d4d0c8"></div><div class="t" style="left:192px;top:1px">将对象复制到<span class="l">&nbsp;Windows&nbsp;</span>剪贴板<span class="l">:&nbsp;&nbsp;&nbsp;COPYCLIP</span></div></div>
<div class="a" style="left:0;top:51px;width:436px;height:17px;background:#d4d0c8"><div class="a" style="left:2px;top:4px;width:9px;height:9px;border:1px solid #000;background:#d4d0c8"><div class="a" style="left:1px;top:3px;width:5px;height:1px;background:#000"></div></div><div class="t" style="left:17px;top:1px;font-weight:bold">宏</div></div>
<div class="a" style="left:14px;top:68px;width:422px;height:17px;border-bottom:1px solid #d4d0c8;color:#000"><div class="t" style="left:3px;top:1px">宏</div><div class="a" style="left:188px;top:0;width:1px;height:17px;background:#d4d0c8"></div><div class="t" style="left:192px;top:1px"><span class="l">^C^C_copyclip</span></div></div>
<div class="a" style="left:0;top:85px;width:436px;height:17px;background:#d4d0c8"><div class="a" style="left:2px;top:4px;width:9px;height:9px;border:1px solid #000;background:#d4d0c8"><div class="a" style="left:1px;top:3px;width:5px;height:1px;background:#000"></div></div><div class="t" style="left:17px;top:1px;font-weight:bold">访问</div></div>
<div class="a" style="left:14px;top:102px;width:422px;height:17px;border-bottom:1px solid #d4d0c8;color:#000"><div class="t" style="left:3px;top:1px">键</div><div class="a" style="left:188px;top:0;width:1px;height:17px;background:#d4d0c8"></div><div class="t" style="left:192px;top:1px"><span class="l">CTRL+C</span></div></div>
<div class="a" style="left:0;top:119px;width:436px;height:17px;background:#d4d0c8"><div class="a" style="left:2px;top:4px;width:9px;height:9px;border:1px solid #000;background:#d4d0c8"><div class="a" style="left:1px;top:3px;width:5px;height:1px;background:#000"></div></div><div class="t" style="left:17px;top:1px;font-weight:bold">高级</div></div>
<div class="a" style="left:14px;top:136px;width:422px;height:17px;border-bottom:1px solid #d4d0c8;color:#aca899"><div class="t" style="left:3px;top:1px">元素<span class="l">&nbsp;ID</span></div><div class="a" style="left:188px;top:0;width:1px;height:17px;background:#d4d0c8"></div><div class="t" style="left:192px;top:1px"><span class="l">ID_Copyclip</span></div></div>
</div>
<div class="a" style="left:460px;top:684px;width:438px;height:59px;border:1px solid #aca899"><div class="t" style="left:4px;top:2px;font-weight:bold">基本</div></div>
<!--BOTTOM-->
<div class="a" style="left:1px;top:773px;width:14px;height:13px;border:1px solid #8e9db5;border-radius:3px;background:#e4e8ee;text-align:center;font:bold 10px/11px 'Liberation Serif',serif;color:#333">i</div>
<div class="t" style="left:24px;top:770px;color:#2414c6;text-decoration:underline">了解关于自定义的详细信息</div>
<div class="btn" style="left:462px;top:771px;width:94px;height:25px;line-height:21px">确定<span class="l">(<u>O</u>)</span></div>
<div class="btn" style="left:576px;top:771px;width:94px;height:25px;line-height:21px">取消<span class="l">(<u>C</u>)</span></div>
<div class="btn" style="left:690px;top:771px;width:94px;height:25px;line-height:21px;border-color:#c9c7ba;color:#aca899;background:#f5f4ea">应用<span class="l">(<u>A</u>)</span></div>
<div class="btn" style="left:803px;top:771px;width:94px;height:25px;line-height:21px;box-shadow:inset 0 0 0 1px #a6bbe6">帮助<span class="l">(<u>H</u>)</span></div>
</body>
</html>
